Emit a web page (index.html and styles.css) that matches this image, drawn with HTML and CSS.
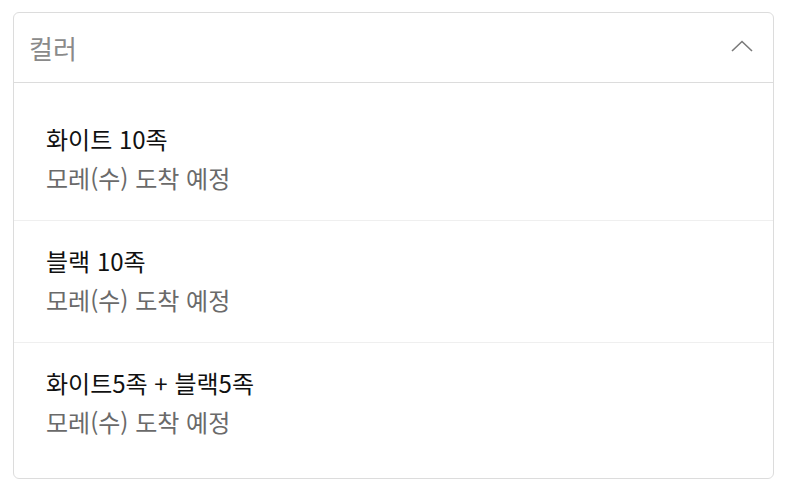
FILE: index.html
```html
<!DOCTYPE html>
<html lang="ko">
<head>
<meta charset="utf-8">
<link rel="stylesheet" href="styles.css">
</head>
<body>
<div class="select">
  <div class="select-head">
    <span class="select-label">컬러</span>
    <svg class="chevron" width="22" height="12" viewBox="0 0 22 12"><path d="M1 11 L11 1.5 L21 11" fill="none" stroke="#7a7a7a" stroke-width="1.6"/></svg>
  </div>
  <ul class="options">
    <li class="option">
      <div class="opt-title">화이트 10족</div>
      <div class="opt-sub">모레(수) 도착 예정</div>
    </li>
    <li class="option">
      <div class="opt-title">블랙 10족</div>
      <div class="opt-sub">모레(수) 도착 예정</div>
    </li>
    <li class="option">
      <div class="opt-title">화이트5족 + 블랙5족</div>
      <div class="opt-sub">모레(수) 도착 예정</div>
    </li>
  </ul>
</div>
</body>
</html>
```
FILE: styles.css
```css
html, body {
  margin: 0;
  padding: 0;
  background: #fff;
}
body {
  padding: 12px 16px 0 13px;
  font-family: "Noto Sans CJK KR", "Noto Sans", sans-serif;
}
.select {
  width: 759px;
  height: 465px;
  border: 1px solid #dcdcdc;
  border-radius: 6px;
  box-sizing: content-box;
  display: flex;
  flex-direction: column;
}
.select-head {
  height: 69px;
  border-bottom: 1px solid #dcdcdc;
  display: flex;
  align-items: center;
  justify-content: space-between;
  padding: 0 20px 0 15px;
}
.select-label {
  font-size: 26px;
  line-height: 36px;
  color: #8a8a8a;
}
.chevron {
  display: block;
  margin-top: -4px;
}
.options {
  list-style: none;
  margin: 0;
  padding: 14px 0 0;
}
.option {
  padding: 24px 32px 26px;
  border-bottom: 1px solid #efefef;
}
.option:first-child {
  padding-top: 26px;
}
.option:last-child {
  border-bottom: none;
}
.opt-title {
  font-size: 24px;
  line-height: 32px;
  color: #111;
}
.opt-sub {
  font-size: 24px;
  line-height: 32px;
  margin-top: 7px;
  color: #6a6a6a;
}
```
